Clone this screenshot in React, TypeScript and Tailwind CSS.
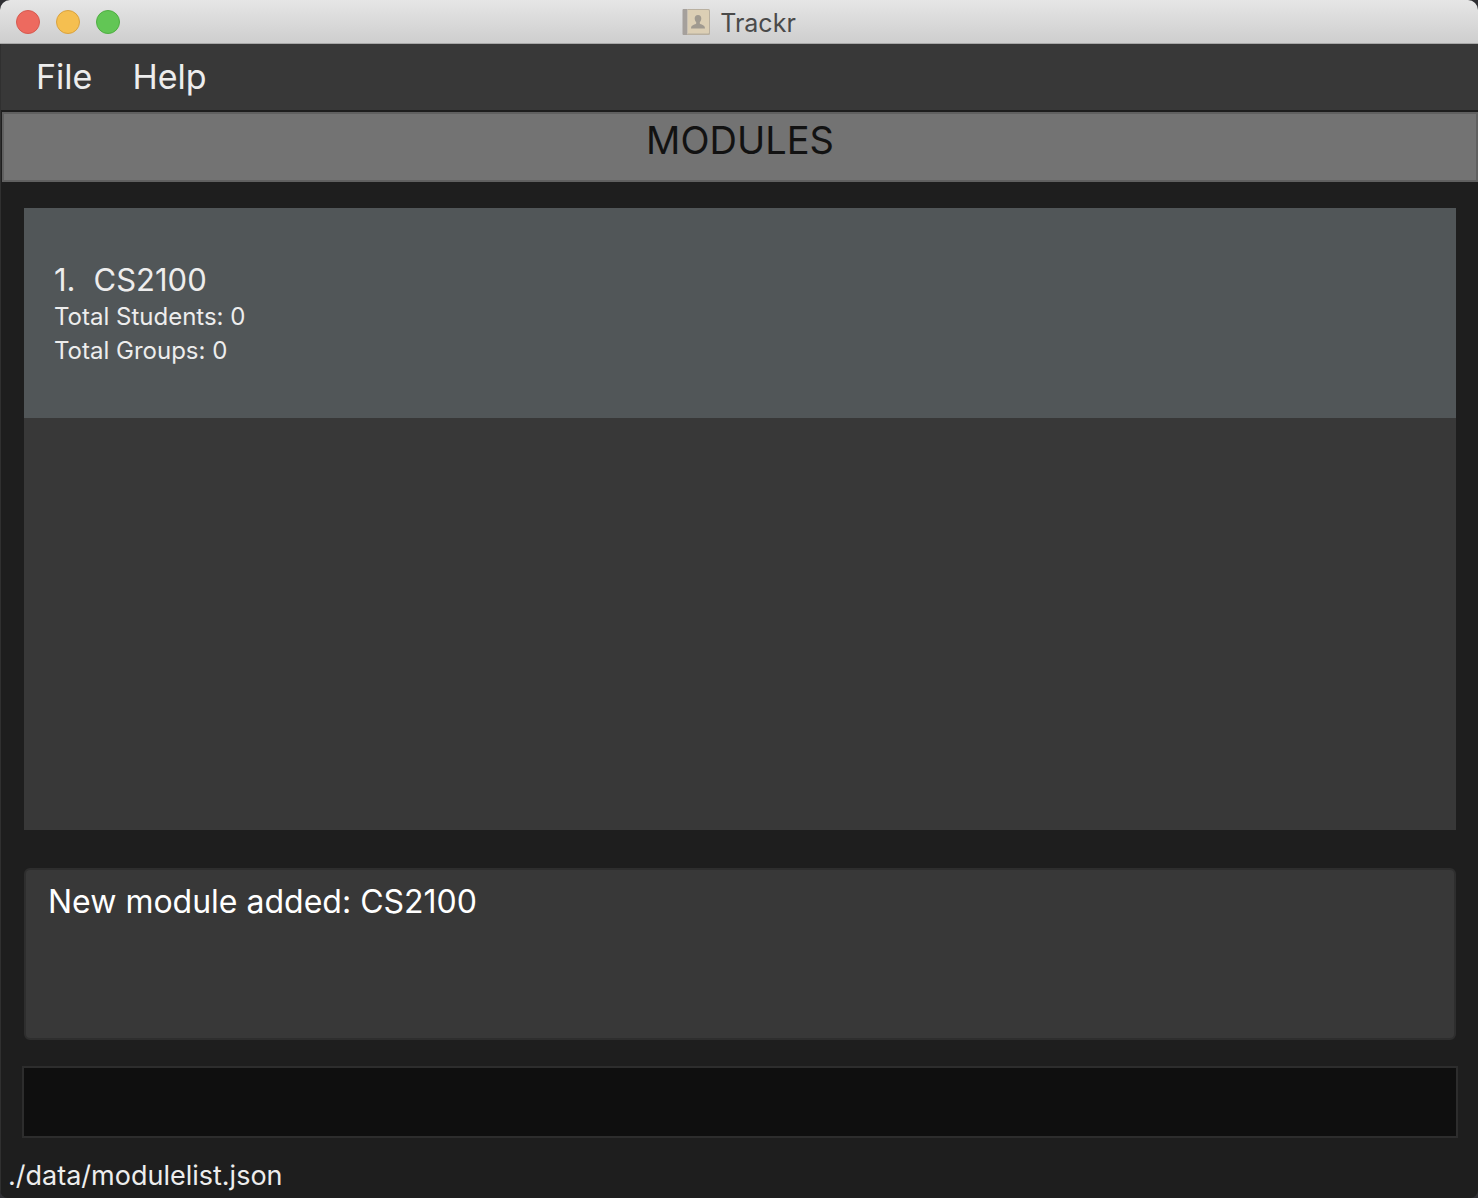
import React from "react";

const windowControls = [
  { label: "Close", className: "size-6 rounded-full border border-[#d65a50] bg-[#ed6a5f]" },
  { label: "Minimize", className: "size-6 rounded-full border border-[#d9a23f] bg-[#f5bf50]" },
  { label: "Zoom", className: "size-6 rounded-full border border-[#4fae42] bg-[#62c655]" },
];

const modules = [{ code: "CS2100", students: 0, groups: 0 }];

function AddressBookIcon() {
  return (
    <svg width="28" height="28" viewBox="0 0 28 28" aria-hidden="true">
      <rect x="1" y="1" width="27" height="26" rx="1.5" fill="#b9b0a0" />
      <rect x="5" y="2" width="22" height="23.5" rx="1" fill="#dccfb5" />
      <path d="M1.5 1H5V27H1.5Q0.5 27 0.5 26V2Q0.5 1 1.5 1Z" fill="#a5a09c" />
      <path d="M5.5 1.5V26" stroke="#c9c1b4" strokeWidth="1" />
      <path
        d="M16 7C13.8 7 12.6 8.6 12.7 10.6C12.8 12.4 13.4 13.4 14.2 14.3V15.6C13.4 16.8 9.2 16.6 9 20.4H23C22.8 16.6 18.6 16.8 17.8 15.6V14.3C18.6 13.4 19.2 12.4 19.3 10.6C19.4 8.6 18.2 7 16 7Z"
        fill="#a09a90"
      />
    </svg>
  );
}

export default function App() {
  return (
    <div className="bg-[#2f2f33] font-['Inter',sans-serif]">
      <div className="flex min-h-screen flex-col overflow-hidden rounded-t-[10px] rounded-b-lg bg-[#1e1e1e] text-[#ededed]">
        <header className="grid h-11 grid-cols-[1fr_auto_1fr] items-center border-b border-[#a8a8a8] bg-linear-to-b from-[#e6e6e6] to-[#cecece] px-4">
          <div className="flex gap-4">
            {windowControls.map((c) => (
              <button key={c.label} type="button" aria-label={c.label} className={c.className} />
            ))}
          </div>
          <div className="flex items-center gap-2.5">
            <AddressBookIcon />
            <h1 className="pt-0.5 text-[25px] leading-8 text-[#4a4a4a]">Trackr</h1>
          </div>
        </header>

        <div className="flex grow flex-col border-l border-[#303030]">
          <nav className="flex h-[66px] items-center gap-10 bg-[#383838] px-[35px] text-[34px] leading-10">
            <button type="button">File</button>
            <button type="button">Help</button>
          </nav>

          <h2 className="mt-0.5 ml-px h-[70px] border-2 border-[#606060] bg-[#737373] pt-1.5 text-center text-[38px] leading-10 text-[#121212]">
            MODULES
          </h2>

          <main className="flex grow flex-col pr-[22px] pl-[23px]">
            <ul className="mt-[26px] grow bg-[#383838]">
              {modules.map((m, i) => (
                <li key={m.code} className="h-[210px] bg-[#515658] px-[30px] pt-[52px]">
                  <h3 className="flex gap-[18px] text-[31px] leading-10">
                    <span>{i + 1}.</span>
                    <span>{m.code}</span>
                  </h3>
                  <p className="text-[24px] leading-[34px]">Total Students: {m.students}</p>
                  <p className="text-[24px] leading-[34px]">Total Groups: {m.groups}</p>
                </li>
              ))}
            </ul>

            <textarea
              readOnly
              aria-label="Result"
              value="New module added: CS2100"
              className="mt-[38px] block h-[172px] w-full resize-none rounded-md border-2 border-[#2e2e2e] bg-[#383838] px-[22px] py-3 text-[32px] leading-10 text-white outline-none"
            />

            <input
              type="text"
              aria-label="Command"
              className="-mx-0.5 mt-[26px] h-[72px] border-2 border-[#2d2d2d] bg-[#0f0f0f] px-4 text-[32px] text-white outline-none"
            />
          </main>

          <footer className="flex h-[60px] items-end px-[7px] pb-0.5 text-[27px] leading-10">
            ./data/modulelist.json
          </footer>
        </div>
      </div>
    </div>
  );
}
